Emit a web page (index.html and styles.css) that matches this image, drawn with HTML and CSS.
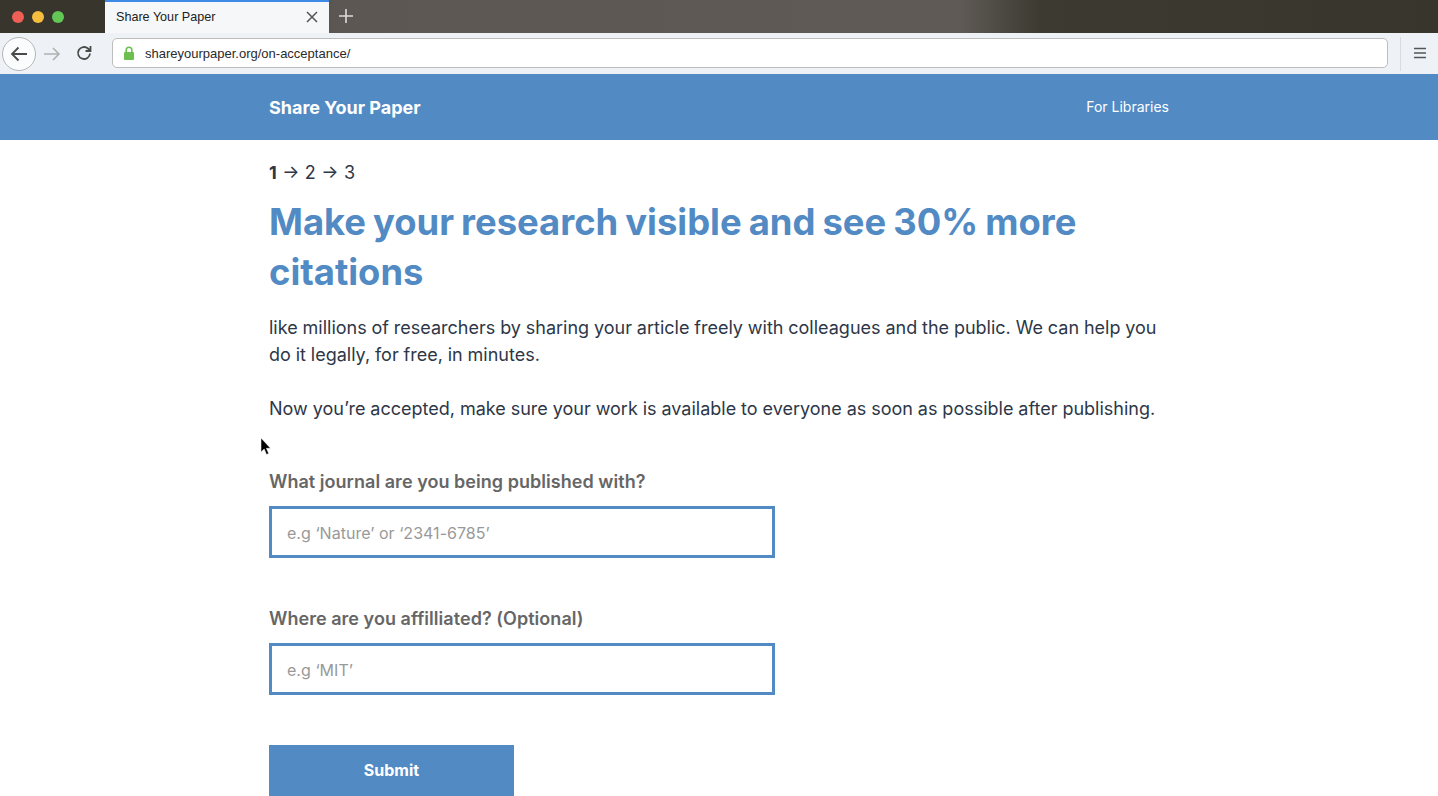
FILE: index.html
```html
<!DOCTYPE html>
<html lang="en">
<head>
<meta charset="utf-8">
<title>Share Your Paper</title>
<link rel="stylesheet" href="styles.css">
</head>
<body>
<div class="chrome-tabs">
  <div class="traffic">
    <span class="dot red"></span><span class="dot yellow"></span><span class="dot green"></span>
  </div>
  <div class="tab">
    <span class="tab-title">Share Your Paper</span>
    <svg class="tab-close" width="12" height="12" viewBox="0 0 12 12"><path d="M1 1l10 10M11 1L1 11" stroke="#555" stroke-width="1.5" fill="none"/></svg>
  </div>
  <svg class="tab-new" width="16" height="16" viewBox="0 0 16 16"><path d="M8 1v14M1 8h14" stroke="#ddd" stroke-width="1.6" fill="none"/></svg>
</div>
<div class="chrome-nav">
  <span class="back">
    <svg width="20" height="20" viewBox="0 0 20 20"><path d="M18 10H3M9.500 3.500L3 10l6.500 6.500" stroke="#4a4a4a" stroke-width="1.800" fill="none"/></svg>
  </span>
  <svg class="fwd" width="18" height="18" viewBox="0 0 18 18"><path d="M1 9h15M10 3l6 6-6 6" stroke="#b0b0b0" stroke-width="1.600" fill="none"/></svg>
  <svg class="reload" width="18" height="18" viewBox="0 0 18 18"><path d="M15 9.500A6 6 0 1 1 13 4.500L15 6.500M15.500 2v5h-5" stroke="#4a4a4a" stroke-width="1.800" fill="none"/></svg>
  <div class="urlbar">
    <svg class="lock" width="12" height="14" viewBox="0 0 12 14"><rect x="1" y="6" width="10" height="8" rx="1" fill="#6cc04f"/><path d="M3.200 6.500V4a2.800 2.800 0 0 1 5.600 0v2.500" stroke="#6cc04f" stroke-width="1.600" fill="none"/></svg>
    <span class="url">shareyourpaper.org/on-acceptance/</span>
  </div>
  <span class="nav-sep"></span>
  <svg class="menu" width="12" height="12" viewBox="0 0 12 12"><path d="M0 1.500h12M0 6h12M0 10.500h12" stroke="#555" stroke-width="1.500" fill="none"/></svg>
</div>
<header class="site-header">
  <div class="wrap header-row">
    <a class="brand">Share Your Paper</a>
    <a class="header-link">For Libraries</a>
  </div>
</header>
<main class="wrap main">
  <p class="steps"><b>1</b> → 2 → 3</p>
  <h1 class="title">Make your research visible and see 30% more citations</h1>
  <p class="body-text">like millions of researchers by sharing your article freely with colleagues and the public. We can help you do it legally, for free, in minutes.</p>
  <p class="body-text gap-top">Now you’re accepted, make sure your work is available to everyone as soon as possible after publishing.</p>
  <label class="field-label first">What journal are you being published with?</label>
  <div class="field">e.g ‘Nature’ or ‘2341-6785’</div>
  <label class="field-label second">Where are you affilliated? (Optional)</label>
  <div class="field">e.g ‘MIT’</div>
  <button class="submit" type="button">Submit</button>
</main>
<svg class="cursor" width="12" height="18" viewBox="0 0 12 18"><path d="M1 0v14l3.200-3 2.300 5.500 2.200-1-2.300-5.200H10.500z" fill="#000" stroke="#fff" stroke-width=".5"/></svg>
</body>
</html>
```
FILE: styles.css
```css
* { box-sizing: border-box; }
html, body { margin: 0; padding: 0; }
body { height: 796px; overflow: hidden; background: #fff; font-family: Inter, sans-serif; color: #2d3748; position: relative; }
.chrome-tabs { height: 33px; display: flex; align-items: stretch; background: linear-gradient(90deg, #38352c 0, #38352c 105px, #5c5752 340px, #5f5a56 960px, #3c3a31 1040px, #38362c 1438px); }
.traffic { width: 105px; display: flex; align-items: center; gap: 8px; padding-left: 12px; }
.dot { width: 12px; height: 12px; border-radius: 50%; }
.red { background: #ee5f56; }
.yellow { background: #f6bd3f; }
.green { background: #62c755; }
.tab { width: 224px; background: #f5f7f9; border-top: 2px solid #3d8ae6; display: flex; align-items: center; justify-content: space-between; padding: 0 11px 2px; font-size: 12.6px; color: #222; font-family: "Liberation Sans", sans-serif; }
.tab-new { align-self: center; margin-left: 9px; margin-top: -2px; }
.chrome-nav { height: 41px; background: #eef2f7; display: flex; align-items: center; position: relative; padding-left: 2px; }
.back { width: 34px; height: 34px; border: 1px solid #b5b5b5; border-radius: 50%; background: #fbfcfd; display: flex; align-items: center; justify-content: center; }
.fwd { margin-left: 7px; }
.reload { margin-left: 14px; margin-top: -2px; }
.urlbar { margin-left: 19px; width: 1276px; height: 30px; background: #fff; border: 1px solid #bdbdbd; border-radius: 5px; display: flex; align-items: center; padding-left: 10px; margin-top: -1px; }
.url { margin-left: 10px; font-size: 13px; color: #2a2a2a; font-family: "Liberation Sans", sans-serif; }
.nav-sep { width: 1px; height: 34px; background: #d8dbe0; margin-left: 12px; }
.menu { margin-left: 13px; margin-top: -2px; }
.site-header { height: 66px; background: #528ac4; color: #fff; }
.wrap { width: 900px; margin-left: 269px; }
.header-row { height: 100%; display: flex; align-items: center; justify-content: space-between; }
.brand { font-size: 18px; font-weight: 700; }
.header-link { font-size: 14px; position: relative; top: -1px; }
.main { padding-top: 21px; }
.steps { margin: 0; font-size: 18px; line-height: 24px; word-spacing: 0.4px; }
.title { margin: 12px 0 0; font-size: 36.4px; line-height: 50px; font-weight: 700; color: #528ac4; word-spacing: -1.6px; }
.body-text { margin: 17px 0 0; font-size: 18px; line-height: 27px; color: #2d3748; word-spacing: -0.2px; }
.gap-top { margin-top: 27px; word-spacing: -0.13px; }
.field-label { display: block; font-size: 18px; line-height: 24px; font-weight: 600; color: #666; letter-spacing: 0.04px; }
.first { margin-top: 48px; }
.second { margin-top: 49px; }
.field { margin-top: 12px; width: 506px; height: 52px; border: 3px solid #528ac4; padding: 2px 0 0 15px; display: flex; align-items: center; font-size: 16px; color: #999; letter-spacing: 0.002em; }
.submit { display: block; margin-top: 50px; width: 245px; height: 51px; border: 0; padding: 0 0 2px; background: #528ac4; color: #fff; font: 700 16px Inter, sans-serif; }
.cursor { position: absolute; left: 260px; top: 438px; }
```
